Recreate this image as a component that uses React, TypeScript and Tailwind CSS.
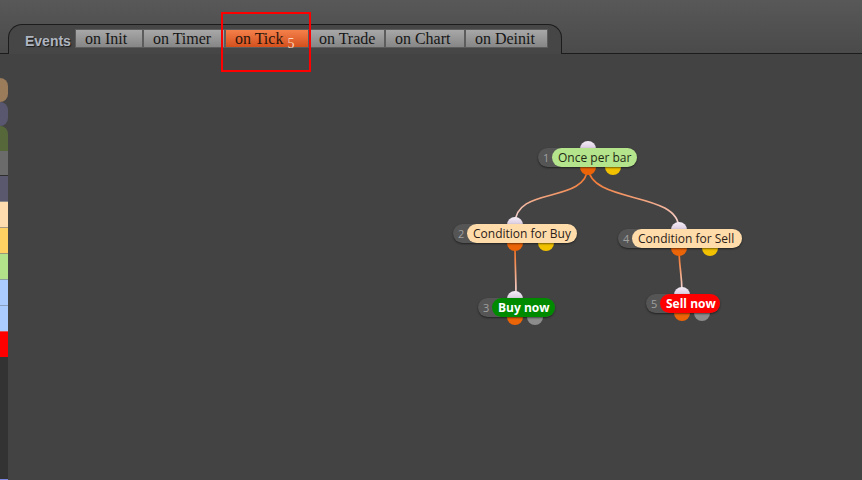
const tabs = [
  { label: "on Init", w: "w-[68px]" },
  { label: "on Timer", w: "w-[82px]" },
  { label: "on Tick", w: "w-[84px]", active: true, badge: "5" },
  { label: "on Trade", w: "w-[76px]" },
  { label: "on Chart", w: "w-[80px]" },
  { label: "on Deinit", w: "w-[83px]" },
];

const swatches = [
  { cls: "h-[24px] bg-[#9a7b5a] rounded-r-full" },
  { cls: "h-[24px] bg-[#59576f] rounded-r-full" },
  { cls: "h-[25px] bg-[#56683a] rounded-tr-full" },
  { cls: "h-[25px] bg-[#6b6b6b] border-b border-[#2e2e2e]" },
  { cls: "h-[26px] bg-[#5a586f] border-b border-[#8a8a8a]" },
  { cls: "h-[26px] bg-[#ffdcb0] border-b border-[#a89880]" },
  { cls: "h-[26px] bg-[#ffd062] border-b border-[#9a9a7a]" },
  { cls: "h-[26px] bg-[#b2e28a] border-b border-[#8aa0a0]" },
  { cls: "h-[26px] bg-[#aaccff] border-b border-[#8aa0c0]" },
  { cls: "h-[26px] bg-[#aaccff] border-b border-[#e05050]" },
  { cls: "h-[25px] bg-[#ff0000]" },
];

type Node = {
  n: number;
  label: string;
  left: number;
  top: number;
  w: number;
  bg: string;
  text: string;
  topX: number;
  outs: [number, string][];
};

const nodes: Node[] = [
  { n: 1, label: "Once per bar", left: 538, top: 148, w: 99, bg: "bg-[#b4e48c]", text: "text-[#1e2a14] font-normal", topX: 588, outs: [[588, "bg-[#ec6408]"], [613, "bg-[#f2c200]"]] },
  { n: 2, label: "Condition for Buy", left: 453, top: 224, w: 124, bg: "bg-[#ffdcaa]", text: "text-[#2a2018] font-normal", topX: 515, outs: [[515, "bg-[#ec6408]"], [546, "bg-[#f2c200]"]] },
  { n: 4, label: "Condition for Sell", left: 618, top: 229, w: 124, bg: "bg-[#ffdcaa]", text: "text-[#2a2018] font-normal", topX: 679, outs: [[679, "bg-[#ec6408]"], [710, "bg-[#f2c200]"]] },
  { n: 3, label: "Buy now", left: 478, top: 298, w: 77, bg: "bg-[#008a00]", text: "text-white font-bold", topX: 515, outs: [[515, "bg-[#ec6408]"], [535, "bg-[#8c8c8c]"]] },
  { n: 5, label: "Sell now", left: 646, top: 294, w: 74, bg: "bg-[#ff0000]", text: "text-white font-bold", topX: 682, outs: [[682, "bg-[#ec6408]"], [702, "bg-[#8c8c8c]"]] },
];

const links = [
  { id: "l1", d: "M588,167 C586,205 515,185 515,224", y1: 167, y2: 224 },
  { id: "l2", d: "M588,167 C590,205 679,190 679,229", y1: 167, y2: 229 },
  { id: "l3", d: "M515,243 C515,268 516,272 516,298", y1: 243, y2: 298 },
  { id: "l4", d: "M679,248 C679,268 682,272 682,294", y1: 248, y2: 294 },
];

function Wires() {
  return (
    <svg className="absolute inset-0" width={862} height={480}>
      <defs>
        {links.map((l) => (
          <linearGradient key={l.id} id={l.id} gradientUnits="userSpaceOnUse" x1="0" y1={l.y1} x2="0" y2={l.y2}>
            <stop offset="0" stopColor="#f06410" />
            <stop offset="0.35" stopColor="#f28a50" />
            <stop offset="1" stopColor="#f6e2ec" />
          </linearGradient>
        ))}
      </defs>
      {links.map((l) => (
        <path key={l.id} d={l.d} fill="none" stroke={`url(#${l.id})`} strokeWidth={1.7} />
      ))}
    </svg>
  );
}

function Dot({ cx, cy, cls }: { cx: number; cy: number; cls: string }) {
  return (
    <div
      className={`absolute h-[16px] w-[16px] rounded-full ${cls}`}
      style={{ left: cx - 8, top: cy - 8 }}
    />
  );
}

function NodePill({ node }: { node: Node }) {
  return (
    <div
      className="absolute flex h-[19px] items-center rounded-full bg-[#555555] shadow-[0_1px_2px_rgba(0,0,0,0.5)]"
      style={{ left: node.left, top: node.top, width: node.w }}
    >
      <span className="w-[14px] pl-[5px] text-[11px] leading-none text-[#a0a0a0]">{node.n}</span>
      <span
        className={`flex h-[19px] flex-1 items-center rounded-full pl-[6px] text-[12px] leading-none ${node.bg} ${node.text}`}
      >
        {node.label}
      </span>
    </div>
  );
}

export default function App() {
  return (
    <div
      className="relative flex h-[480px] w-[862px] flex-col overflow-hidden bg-[#434343]"
      style={{ fontFamily: "'Open Sans', 'Noto Sans', sans-serif" }}
    >
      <header className="flex h-[54px] bg-gradient-to-b from-[#585858] to-[#4a4a4a]">
        <div className="w-[8px] border-b border-[#1c1c1c]" />
        <div className="mt-[24px] flex h-[30px] w-[554px] items-start rounded-t-[14px] border-l border-r border-t border-[#1c1c1c] bg-[#464646] pl-[16px] pt-[4px]">
          <span className="mr-[4px] mt-[2px] font-['Liberation_Sans',sans-serif] text-[14px] font-bold text-[#aeb5c0] [text-shadow:1px_1px_1px_#1a1a1a]">
            Events
          </span>
          {tabs.map((t) => (
            <div
              key={t.label}
              className={`flex h-[19px] items-center border border-[#5c5c5c] pl-[9px] font-['Liberation_Serif',serif] text-[16px] leading-none ${t.w} ${
                t.active
                  ? "bg-gradient-to-b from-[#f4804a] to-[#d4501c] text-[#2a140a]"
                  : "bg-gradient-to-b from-[#a8a8a8] to-[#868686] text-[#161616]"
              }`}
            >
              {t.label}
              {t.badge && (
                <span className="ml-[4px] mt-[10px] text-[14px] text-[#ffd6bc]">{t.badge}</span>
              )}
            </div>
          ))}
        </div>
        <div className="flex-1 border-b border-[#1c1c1c]" />
      </header>

      <div className="flex flex-1">
        <aside className="flex w-[8px] flex-col">
          <div className="h-[24px]" />
          {swatches.map((s, i) => (
            <div key={i} className={s.cls} />
          ))}
          <div className="flex-1 border-b border-[#7b86e0] bg-[#333333]" />
        </aside>
        <main className="flex-1" />
      </div>

      <div className="pointer-events-none absolute inset-0">
        <Wires />
        {nodes.map((n) => (
          <div key={n.n}>
            <Dot cx={n.topX} cy={n.top + 1} cls="bg-gradient-to-b from-[#f6eef8] to-[#bba4c4]" />
            {n.outs.map(([x, c]) => (
              <Dot key={x} cx={x} cy={n.top + 19} cls={c} />
            ))}
          </div>
        ))}
        {nodes.map((n) => (
          <NodePill key={n.n} node={n} />
        ))}
      </div>

      <div className="absolute left-[221px] top-[12px] h-[60px] w-[90px] border-2 border-[#ff0000]" />
    </div>
  );
}
